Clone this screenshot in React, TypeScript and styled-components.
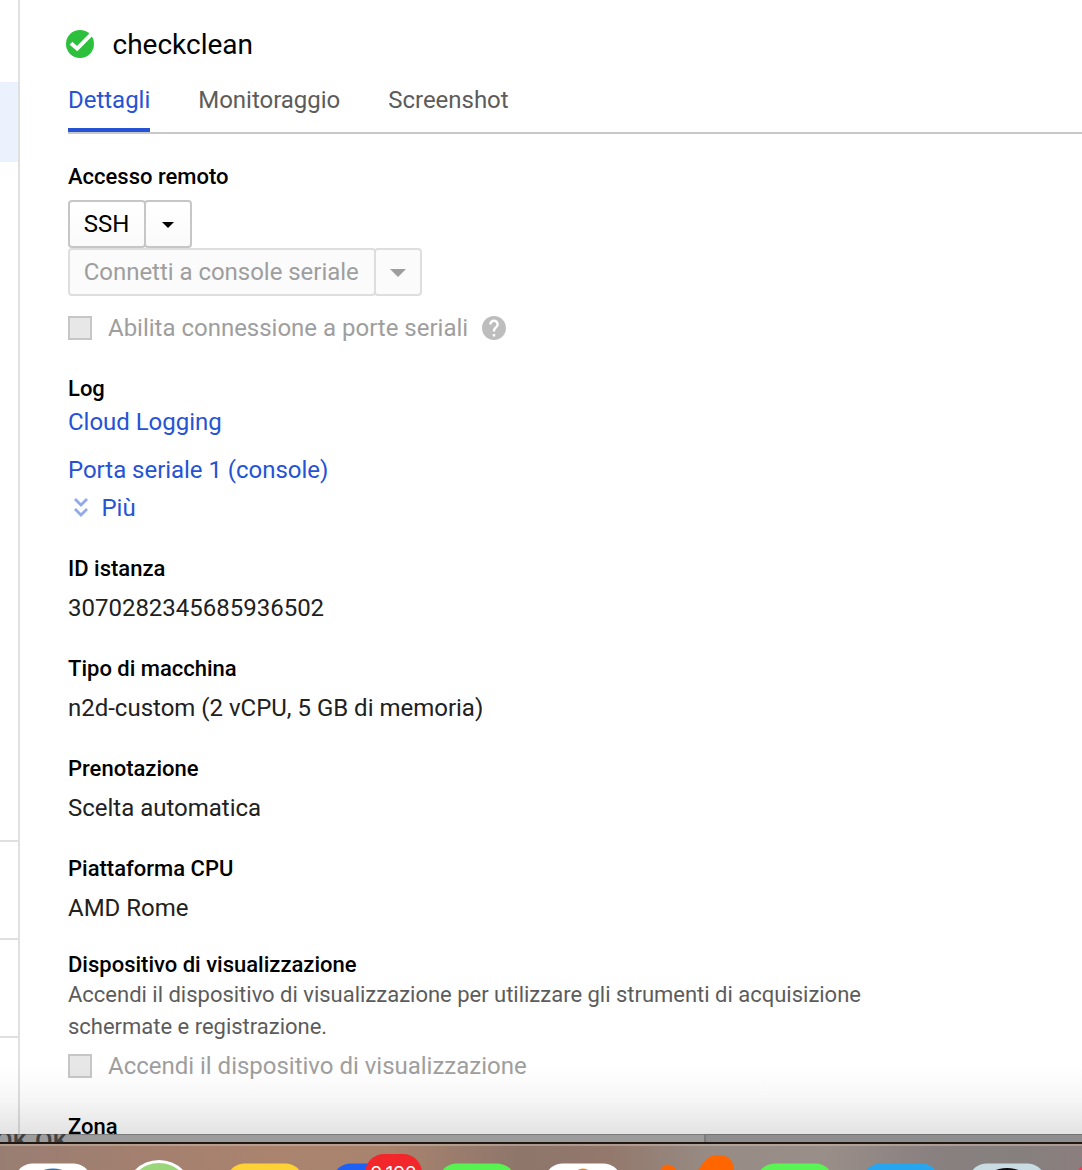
import React from "react";
import styled, { createGlobalStyle } from "styled-components";

const Global = createGlobalStyle`
  * { box-sizing: border-box; }
  body { margin: 0; background: #fff; font-family: Roboto, sans-serif; overflow: hidden; }
`;

const Screen = styled.div`
  display: flex;
  flex-direction: column;
  width: 1082px;
  height: 1170px;
  overflow: hidden;
`;
const Window = styled.div`
  position: relative;
  display: flex;
  height: 1134px;
  overflow: hidden;
  background: #fff;
`;
const Shade = styled.div`
  position: absolute;
  inset: auto 0 0 0;
  height: 68px;
  background: linear-gradient(rgba(0, 0, 0, 0), rgba(0, 0, 0, 0.03) 45%, rgba(0, 0, 0, 0.11));
  pointer-events: none;
`;
const Rail = styled.div`
  display: flex;
  flex-direction: column;
  flex: 0 0 20px;
  border-right: 2px solid #e0e0e0;
`;
const RailCell = styled.div<{ $h: number; $active?: boolean; $line?: boolean }>`
  flex: 0 0 ${(p) => p.$h}px;
  background: ${(p) => (p.$active ? "#ebf2fe" : "transparent")};
  border-bottom: ${(p) => (p.$line ? "2px solid #e0e0e0" : "0")};
`;
const Panel = styled.main`
  flex: 1;
  padding: 28px 0 0 48px;
`;
const TitleRow = styled.header`
  display: flex;
  align-items: center;
  gap: 18.5px;
  height: 32px;
  margin-left: -2px;
`;
const Title = styled.h1`
  margin: 0;
  padding-top: 2px;
  font-size: 28px;
  line-height: 32px;
  font-weight: 400;
  color: #000;
`;
const Tabs = styled.nav`
  display: flex;
  gap: 48px;
  height: 50px;
  margin-top: 24px;
  border-bottom: 2px solid #c8c8c8;
`;
const Tab = styled.span<{ $active?: boolean }>`
  height: 48px;
  font-size: 24px;
  line-height: 32px;
  letter-spacing: -0.02px;
  color: ${(p) => (p.$active ? "#2553d4" : "#5c5c5c")};
  border-bottom: 4px solid ${(p) => (p.$active ? "#2553d4" : "transparent")};
`;
const Label = styled.h2<{ $top?: number }>`
  height: 24px;
  margin: ${(p) => p.$top ?? 32}px 0 0;
  font-size: 22px;
  line-height: 26px;
  font-weight: 500;
  color: #000;
`;
const Value = styled.div`
  margin-top: 12px;
  font-size: 24px;
  line-height: 32px;
  letter-spacing: -0.01px;
  color: #212121;
`;
const ButtonGroup = styled.div<{ $top?: number }>`
  display: flex;
  margin-top: ${(p) => p.$top ?? 0}px;
`;
const Button = styled.button<{ $disabled?: boolean; $w: number; $text?: boolean }>`
  display: flex;
  align-items: center;
  justify-content: ${(p) => (p.$text ? "flex-start" : "center")};
  width: ${(p) => p.$w}px;
  height: 48px;
  padding: 0 0 0 ${(p) => (p.$text ? 13.7 : 0)}px;
  font: 400 24px/32px Roboto, sans-serif;
  letter-spacing: -0.03px;
  white-space: nowrap;
  color: ${(p) => (p.$disabled ? "#9e9e9e" : "#000")};
  background: ${(p) => (p.$disabled ? "#fbfbfb" : "linear-gradient(#fff, #fafafa)")};
  border: 2px solid ${(p) => (p.$disabled ? "#dedede" : "#c6c6c6")};
  border-radius: 4px;
  & + & { margin-left: -2px; }
`;
const Caret = styled.span<{ $s: number }>`
  border: ${(p) => p.$s}px solid transparent;
  border-top-color: currentColor;
  border-bottom: 0;
  margin-top: 1px;
`;
const CheckRow = styled.label<{ $top: number }>`
  display: flex;
  align-items: center;
  height: 32px;
  margin-top: ${(p) => p.$top}px;
  font-size: 24px;
  line-height: 32px;
  letter-spacing: -0.01px;
  color: #9e9e9e;
`;
const Box = styled.span`
  width: 24px;
  height: 24px;
  margin-right: 16px;
  background: #e7e7e7;
  border: 2px solid #c6c6c6;
`;
const HelpIcon = styled.svg`
  margin-left: 14px;
`;
const Link = styled.a<{ $top: number }>`
  display: flex;
  align-items: center;
  margin-top: ${(p) => p.$top}px;
  font-size: 24px;
  line-height: 32px;
  letter-spacing: -0.03px;
  color: #2553d4;
`;
const MoreIcon = styled.svg`
  margin: 0 12.500px 3px 5px;
`;
const Note = styled.p`
  width: 840px;
  margin: 3px 0 0;
  font-size: 22px;
  line-height: 32px;
  letter-spacing: -0.01px;
  color: #5c5c5c;
`;
const Backdrop = styled.div`
  display: flex;
  height: 8px;
  overflow: hidden;
  background: #9c9c9c;
  box-shadow: inset 0 1px #7c7c7c;
  color: #424242;
`;
const BackText = styled.span`
  flex: 0 0 709px;
  margin: -7px 0 0 -5px;
  font-size: 25.500px;
  line-height: 28px;
  font-weight: 500;
`;
const BackRight = styled.div`
  flex: 1;
  border-left: 2px solid #7b7b7b;
  background: #8e8e8e;
  box-shadow: inset 0 1px #747474;
`;
const Dock = styled.footer`
  height: 28px;
  border-top: 2px solid #1f1813;
  background: linear-gradient(90deg, #987e72 0%, #a5806f 15%, #aa846e 26%, #a8836e 36%, #8e766b 48%, #93786b 56%, #978c85 66%, #9a8f88 76%, #898080 86%, #85807d 94%, #8b7e7e 100%);
`;

const tiles = [
  { x: 15, fill: "#fff" },
  { x: 227, fill: "#fdd236" },
  { x: 333, fill: "#1c60f6" },
  { x: 439, fill: "#58f251" },
  { x: 545, fill: "#fff" },
  { x: 757, fill: "#5bf455" },
  { x: 863, fill: "#27a5ef" },
  { x: 969, fill: "#c9dce4" },
];

const DockIcons = () => (
  <svg width="1082" height="26" viewBox="0 1144 1082 26">
    <path d="M0 1145H1082" stroke="#c9b5a6" strokeOpacity=".55" strokeWidth="2" />
    {tiles.map((t) => (
      <path
        key={t.x}
        fill={t.fill}
        d={`M${t.x} 1176C${t.x + 4} 1167 ${t.x + 10} 1163.5 ${t.x + 20} 1163.5H${t.x + 56}C${t.x + 66} 1163.5 ${t.x + 72} 1167 ${t.x + 76} 1176Z`}
      />
    ))}
    <ellipse cx="53" cy="1182" rx="20" ry="13.5" fill="#2f71a9" />
    <circle cx="159" cy="1194" r="34" fill="#fff" />
    <circle cx="159" cy="1194" r="31" fill="#9cd67a" />
    <rect x="365" y="1154" width="57" height="40" rx="19" fill="#f1272c" />
    <text x="393.5" y="1180" textAnchor="middle" fontFamily="Inter, sans-serif" fontSize="19" fill="#fff">9.192</text>
    <ellipse cx="583" cy="1176" rx="9" ry="7.5" fill="#e98425" />
    <path d="M660 1172Q661 1164.500 668 1164.500Q673 1165 678 1172Z" fill="#ff6600" />
    <path d="M692 1174Q700 1169 704 1162Q709 1155 718 1155Q733 1155 734 1170V1174Z" fill="#ff6600" />
    <ellipse cx="1007" cy="1181" rx="21" ry="13" fill="#0b0f12" />
    <circle cx="1091" cy="1178" r="15" fill="#f5395c" />
  </svg>
);

const fields = [
  ["ID istanza", "3070282345685936502"],
  ["Tipo di macchina", "n2d-custom (2 vCPU, 5 GB di memoria)"],
  ["Prenotazione", "Scelta automatica"],
  ["Piattaforma CPU", "AMD Rome"],
];

export default function App() {
  return (
    <Screen>
      <Global />
      <Window>
        <Rail>
          <RailCell $h={82} />
          <RailCell $h={80} $active />
          <RailCell $h={680} $line />
          <RailCell $h={98} $line />
          <RailCell $h={98} $line />
        </Rail>
        <Panel>
          <TitleRow>
            <svg width="28" height="28" viewBox="0 0 28 28">
              <circle cx="14" cy="14" r="14" fill="#2dc03c" />
              <path d="M5 13.200L11.200 18.600L25.500 4.200" fill="none" stroke="#fff" strokeWidth="3.900" />
            </svg>
            <Title>checkclean</Title>
          </TitleRow>
          <Tabs>
            <Tab $active>Dettagli</Tab>
            <Tab>Monitoraggio</Tab>
            <Tab>Screenshot</Tab>
          </Tabs>
          <Label $top={30}>Accesso remoto</Label>
          <ButtonGroup $top={12}>
            <Button $text $w={78}>SSH</Button>
            <Button $w={48}><Caret $s={6} /></Button>
          </ButtonGroup>
          <ButtonGroup>
            <Button $text $disabled $w={308}>Connetti a console seriale</Button>
            <Button $disabled $w={48}><Caret $s={8} /></Button>
          </ButtonGroup>
          <CheckRow $top={16}>
            <Box />
            Abilita connessione a porte seriali
            <HelpIcon width="24" height="24" viewBox="2 2 20 20" fill="#bdbdbd">
              <path d="M12 2C6.48 2 2 6.48 2 12s4.480 10 10 10 10-4.480 10-10S17.520 2 12 2zm1 17h-2v-2h2v2zm2.070-7.750l-.9.920C13.450 12.900 13 13.500 13 15h-2v-.5c0-1.100.450-2.100 1.170-2.830l1.240-1.260c.370-.360.590-.860.590-1.410 0-1.100-.900-2-2-2s-2 .900-2 2H8c0-2.210 1.790-4 4-4s4 1.790 4 4c0 .880-.360 1.680-.930 2.250z" />
            </HelpIcon>
          </CheckRow>
          <Label>Log</Label>
          <Link $top={6}>Cloud Logging</Link>
          <Link $top={16}>Porta seriale 1 (console)</Link>
          <Link $top={6}>
            <MoreIcon width="16" height="20" viewBox="0 0 16 20">
              <path d="M2 2L8 8L14 2M2 12L8 18L14 12" fill="none" stroke="#92a9ea" strokeWidth="2.8" />
            </MoreIcon>
            Più
          </Link>
          {fields.map(([name, value]) => (
            <React.Fragment key={name}>
              <Label>{name}</Label>
              <Value>{value}</Value>
            </React.Fragment>
          ))}
          <Label $top={28}>Dispositivo di visualizzazione</Label>
          <Note>
            Accendi il dispositivo di visualizzazione per utilizzare gli strumenti di acquisizione schermate e registrazione.
          </Note>
          <CheckRow $top={7}>
            <Box />
            Accendi il dispositivo di visualizzazione
          </CheckRow>
          <Label>Zona</Label>
        </Panel>
        <Shade />
      </Window>
      <Backdrop>
        <BackText>OK OK</BackText>
        <BackRight />
      </Backdrop>
      <Dock><DockIcons /></Dock>
    </Screen>
  );
}
